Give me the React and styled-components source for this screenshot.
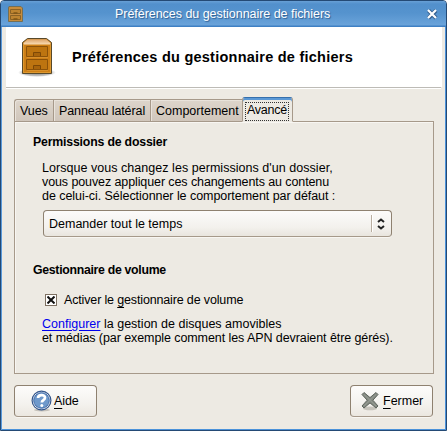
import React from "react";
import styled, { createGlobalStyle } from "styled-components";

const Global = createGlobalStyle`
  * { box-sizing: border-box; }
  body { margin: 0; background: #fff; }
`;

const Window = styled.main`
  width: 447px;
  height: 431px;
  display: flex;
  flex-direction: column;
  overflow: hidden;
  background: #edeae3;
  border: 1px solid #244a75;
  border-radius: 4px 4px 0 0;
  box-shadow: inset 1px 0 #5b9bdc, inset -1px 0 #4b92da, inset 0 -1px #4b92da;
  color: #000;
  font: 12.5px "Liberation Sans", Arial, sans-serif;
`;

const TitleBar = styled.header`
  height: 26px;
  flex: none;
  display: flex;
  align-items: center;
  padding: 0 7px 0 5px;
  background: linear-gradient(#68a0d6 0, #5290cc 3px, #5593ce 12px, #6aa3da 24px, #3f80c4 25px);
`;

const WindowTitle = styled.h1`
  flex: 1;
  margin: 0 0 0 91px;
  font-size: 12.5px;
  font-weight: 400;
  line-height: 24px;
  letter-spacing: -0.04px;
  color: #fff;
  text-shadow: 1px 1px 1px #315f91;
  white-space: nowrap;
`;

const CloseButton = styled.button`
  display: flex;
  padding: 0;
  border: 0;
  background: none;
`;

const Banner = styled.section`
  height: 60px;
  flex: none;
  display: flex;
  align-items: center;
  margin: 0 4px 0 5px;
  padding-left: 12px;
  background: #fff;
`;

const BannerTitle = styled.h2`
  margin: 0 0 1px 14px;
  font-size: 14.5px;
  font-weight: 700;
  letter-spacing: 0.24px;
  white-space: nowrap;
`;

const Separator = styled.hr`
  height: 2px;
  flex: none;
  margin: 0 5px;
  border: 0;
  border-top: 1px solid #bdbbb6;
  background: #fff;
`;

const TabList = styled.div`
  height: 25px;
  flex: none;
  display: flex;
  align-items: flex-end;
  margin: 8px 13px -1px;
  z-index: 1;
`;

const Tab = styled.button`
  width: ${(p) => p.$width}px;
  height: ${(p) => (p.$active ? 25 : 23)}px;
  padding: ${(p) => (p.$active ? "2px 2px 0" : "1px 0 0 5px")};
  border: 1px solid #a6998a;
  border-right-width: ${(p) => (p.$active ? 1 : 0)}px;
  border-bottom-color: ${(p) => (p.$active ? "#edeae3" : "#a6998a")};
  border-radius: ${(p) => (p.$active || p.$first ? "3px" : "0")} ${(p) => (p.$active ? "3px" : "0")} 0 0;
  background: ${(p) => (p.$active ? "#edeae3" : "linear-gradient(#ddd5cb, #d0c6bb)")};
  box-shadow: ${(p) => (p.$active ? "inset 0 2px #5a98d5" : "inset 1px 1px #e9e3db")};
  ${(p) => p.$active && "border-top-color: #356fac;"}
  font: 12.5px/20px "Liberation Sans", Arial, sans-serif;
  letter-spacing: ${(p) => p.$spacing}px;
  text-align: left;
  white-space: nowrap;
  color: #000;
`;

const FocusRing = styled.span`
  display: block;
  height: 19px;
  width: 44px;
  margin-top: 1px;
  padding-left: 1px;
  border: 1px dotted #333;
  line-height: 15px;
`;

const Panel = styled.section`
  width: 420px;
  height: 253px;
  flex: none;
  margin-left: 13px;
  padding: 12px 0 0 17px;
  border: 1px solid #a6998a;
  box-shadow: inset 1px 1px #f8f6f2;
`;

const SectionTitle = styled.h3`
  margin: ${(p) => p.$top || 0}px 0 0 1px;
  font-size: 12.3px;
  font-weight: 700;
  line-height: 16px;
  letter-spacing: ${(p) => p.$spacing}px;
  white-space: nowrap;
`;

const Paragraph = styled.div`
  margin: ${(p) => p.$top}px 0 0 10px;
`;

const Line = styled.div`
  font-size: 12.5px;
  line-height: 14px;
  letter-spacing: ${(p) => p.$spacing}px;
  white-space: nowrap;
`;

const Link = styled.a`
  color: #0000ee;
  text-decoration: underline;
  text-underline-offset: 2px;
`;

const Select = styled.button`
  width: 349px;
  height: 27px;
  display: flex;
  align-items: center;
  justify-content: space-between;
  margin: 7px 0 0 11px;
  padding: 0 6px 0 5px;
  border: 1px solid #8e8170;
  border-bottom-color: #a6998a;
  border-radius: 4px;
  background: linear-gradient(#fcfbfa, #f3f1ed 65%, #e9e5de);
  box-shadow: 0 1px #f8f6f2;
  font: 12.5px "Liberation Sans", Arial, sans-serif;
  letter-spacing: 0;
  color: #000;
`;

const SelectGrip = styled.span`
  height: 17px;
  display: flex;
  align-items: center;
  padding-left: 5px;
  border-left: 1px solid #b9aea0;
  box-shadow: inset 1px 0 #fff;
`;

const CheckRow = styled.label`
  display: flex;
  align-items: center;
  height: 16px;
  margin: 14px 0 0 13px;
  gap: 7px;
`;

const CheckBox = styled.span`
  width: 12px;
  height: 12px;
  display: flex;
  align-items: center;
  justify-content: center;
  border: 1px solid #7d7062;
  background: #fff;
`;

const Mnemonic = styled.span`
  text-decoration: underline 1px;
  text-decoration-skip-ink: none;
  text-underline-offset: 3px;
`;

const Footer = styled.footer`
  display: flex;
  justify-content: space-between;
  margin: 11px 13px 0;
`;

const Button = styled.button`
  width: 83px;
  height: 32px;
  display: flex;
  align-items: center;
  padding: 0 0 0 ${(p) => p.$inset}px;
  gap: ${(p) => p.$gap}px;
  border: 1px solid #8e8170;
  border-bottom-color: #a6998a;
  border-radius: 4px;
  background: linear-gradient(#fdfcfb, #f4f2ee 60%, #ebe7e0);
  box-shadow: 0 1px #f8f6f2;
  font: 12.5px "Liberation Sans", Arial, sans-serif;
  letter-spacing: ${(p) => p.$spacing}px;
  color: #000;
`;

function SmallCabinet() {
  return (
    <svg width="18" height="18" viewBox="0 0 18 18">
      <path d="M3 1.5H15L16.5 3V16.5H2.5V3Z" fill="#c78c3c" stroke="#746f55" />
      <path d="M4.5 4.5H14.5V8.5H4.5ZM4.5 10.5H14.5V14.5H4.5Z" fill="#bd8430" stroke="#8b6225" />
      <path d="M7.5 8H11.5M7.5 14H11.5" stroke="#805515" strokeWidth="1.4" />
    </svg>
  );
}

function LargeCabinet() {
  return (
    <svg width="40" height="42" viewBox="0 0 40 42">
      <defs>
        <radialGradient id="cabinetShadow">
          <stop offset="0" stopColor="#555" stopOpacity=".8" />
          <stop offset=".75" stopColor="#777" stopOpacity=".45" />
          <stop offset="1" stopColor="#aaa" stopOpacity="0" />
        </radialGradient>
        <linearGradient id="cabinetTop" x1="0" y1="0" x2="0" y2="1">
          <stop stopColor="#dba36a" />
          <stop offset="1" stopColor="#faddb5" />
        </linearGradient>
      </defs>
      <ellipse cx="19" cy="36.5" rx="19" ry="4.5" fill="url(#cabinetShadow)" />
      <path d="M4.5 37.5V6.5L9.5 2.5H28.5L33.5 6.5V37.5Z" fill="#cd7f16" stroke="#57492b" />
      <path d="M5.5 8.5V7L9.8 3.3H28.2L32.5 7V8.5Z" fill="url(#cabinetTop)" />
      <path d="M5.5 8V36.5H32.5V8" fill="none" stroke="#de982f" />
      <path d="M8.5 10.5H29.5V20.5H8.5ZM8.5 23.5H29.5V33.5H8.5Z" fill="#bd7410" stroke="#8c5209" />
      <path d="M9 21.5H30M9 34.5H30" stroke="#dc9634" strokeWidth=".7" />
      <path d="M15.5 20V16.5H22.5V20M15.5 33V29.5H22.5V33" fill="#a8640c" stroke="#7d4806" />
    </svg>
  );
}

function HelpIcon() {
  return (
    <svg width="22" height="22" viewBox="0 0 22 22">
      <ellipse cx="11" cy="20" rx="8" ry="1.5" fill="#aaa69c" opacity=".6" />
      <circle cx="10.5" cy="10.5" r="9.4" fill="#fff" stroke="#34568c" strokeWidth="1.2" />
      <circle cx="10.5" cy="10.5" r="7.8" fill="#6f99cb" stroke="#3f6aa8" />
      <path d="M7 8C7.3 4.3 14 4.1 14 7.8C14 10.2 10.8 10 10.8 12.4" fill="none" stroke="#fff" strokeWidth="2.7" />
      <circle cx="10.8" cy="15.6" r="1.5" fill="#fff" />
    </svg>
  );
}

function StopIcon() {
  return (
    <svg width="18" height="20" viewBox="0 0 18 20">
      <ellipse cx="9" cy="17.4" rx="7" ry="1.8" fill="#aaa69c" opacity=".6" />
      <path d="M3 1.5L9 6.6L15 1.5L17 3.5L11.9 9.2L17 15L15 17L9 11.9L3 17L1 15L6.2 9.2L1 3.5Z" fill="#858b83" stroke="#5f655e" strokeLinejoin="round" />
      <path d="M3 3.5L15 15M15 3.5L3 15" stroke="#979c94" />
    </svg>
  );
}

export default function App() {
  return (
    <>
      <Global />
      <Window>
        <TitleBar>
          <SmallCabinet />
          <WindowTitle>Préférences du gestionnaire de fichiers</WindowTitle>
          <CloseButton aria-label="Fermer">
            <svg width="14" height="14" viewBox="0 0 14 14">
              <path d="M3.5 3.5L11 11M11 3.5L3.5 11" stroke="#345f8f" strokeWidth="4" />
              <path d="M3 3L11 11M11 3L3 11" stroke="#fff" strokeWidth="2.2" />
            </svg>
          </CloseButton>
        </TitleBar>
        <Banner>
          <LargeCabinet />
          <BannerTitle>Préférences du gestionnaire de fichiers</BannerTitle>
        </Banner>
        <Separator />
        <TabList role="tablist">
          <Tab role="tab" $width={39} $first $spacing={-0.1}>Vues</Tab>
          <Tab role="tab" $width={97} $spacing={-0.1}>Panneau latéral</Tab>
          <Tab role="tab" $width={92} $spacing={0}>Comportement</Tab>
          <Tab role="tab" $width={51} $active $spacing={-0.25}><FocusRing>Avancé</FocusRing></Tab>
        </TabList>
        <Panel>
          <SectionTitle $spacing={-0.18}>Permissions de dossier</SectionTitle>
          <Paragraph $top={11}>
            <Line $spacing={0.04}>Lorsque vous changez les permissions d'un dossier,</Line>
            <Line $spacing={-0.1}>vous pouvez appliquer ces changements au contenu</Line>
            <Line $spacing={-0.05}>de celui-ci. Sélectionner le comportement par défaut :</Line>
          </Paragraph>
          <Select>
            <span>Demander tout le temps</span>
            <SelectGrip>
              <svg width="8" height="12" viewBox="0 0 8 12">
                <path d="M1 4L4 1.5L7 4M1 8L4 10.5L7 8" fill="none" stroke="#222" strokeWidth="2" />
              </svg>
            </SelectGrip>
          </Select>
          <SectionTitle $top={25} $spacing={-0.3}>Gestionnaire de volume</SectionTitle>
          <CheckRow>
            <CheckBox>
              <svg width="8" height="8" viewBox="0 0 8 8">
                <path d="M.5 .5L7.5 7.5M7.5 .5L.5 7.5" stroke="#111" strokeWidth="2" />
              </svg>
            </CheckBox>
            <Line $spacing={-0.15}>Activer le <Mnemonic>g</Mnemonic>estionnaire de volume</Line>
          </CheckRow>
          <Paragraph $top={9}>
            <Line $spacing={0.01}><Link>Configurer</Link> la gestion de disques amovibles</Line>
            <Line $spacing={-0.08}>et médias (par exemple comment les APN devraient être gérés).</Line>
          </Paragraph>
        </Panel>
        <Footer>
          <Button $inset={16} $gap={1} $spacing={-0.1}><HelpIcon /><span><Mnemonic>A</Mnemonic>ide</span></Button>
          <Button $inset={10} $gap={4} $spacing={0}><StopIcon /><span><Mnemonic>F</Mnemonic>ermer</span></Button>
        </Footer>
      </Window>
    </>
  );
}
